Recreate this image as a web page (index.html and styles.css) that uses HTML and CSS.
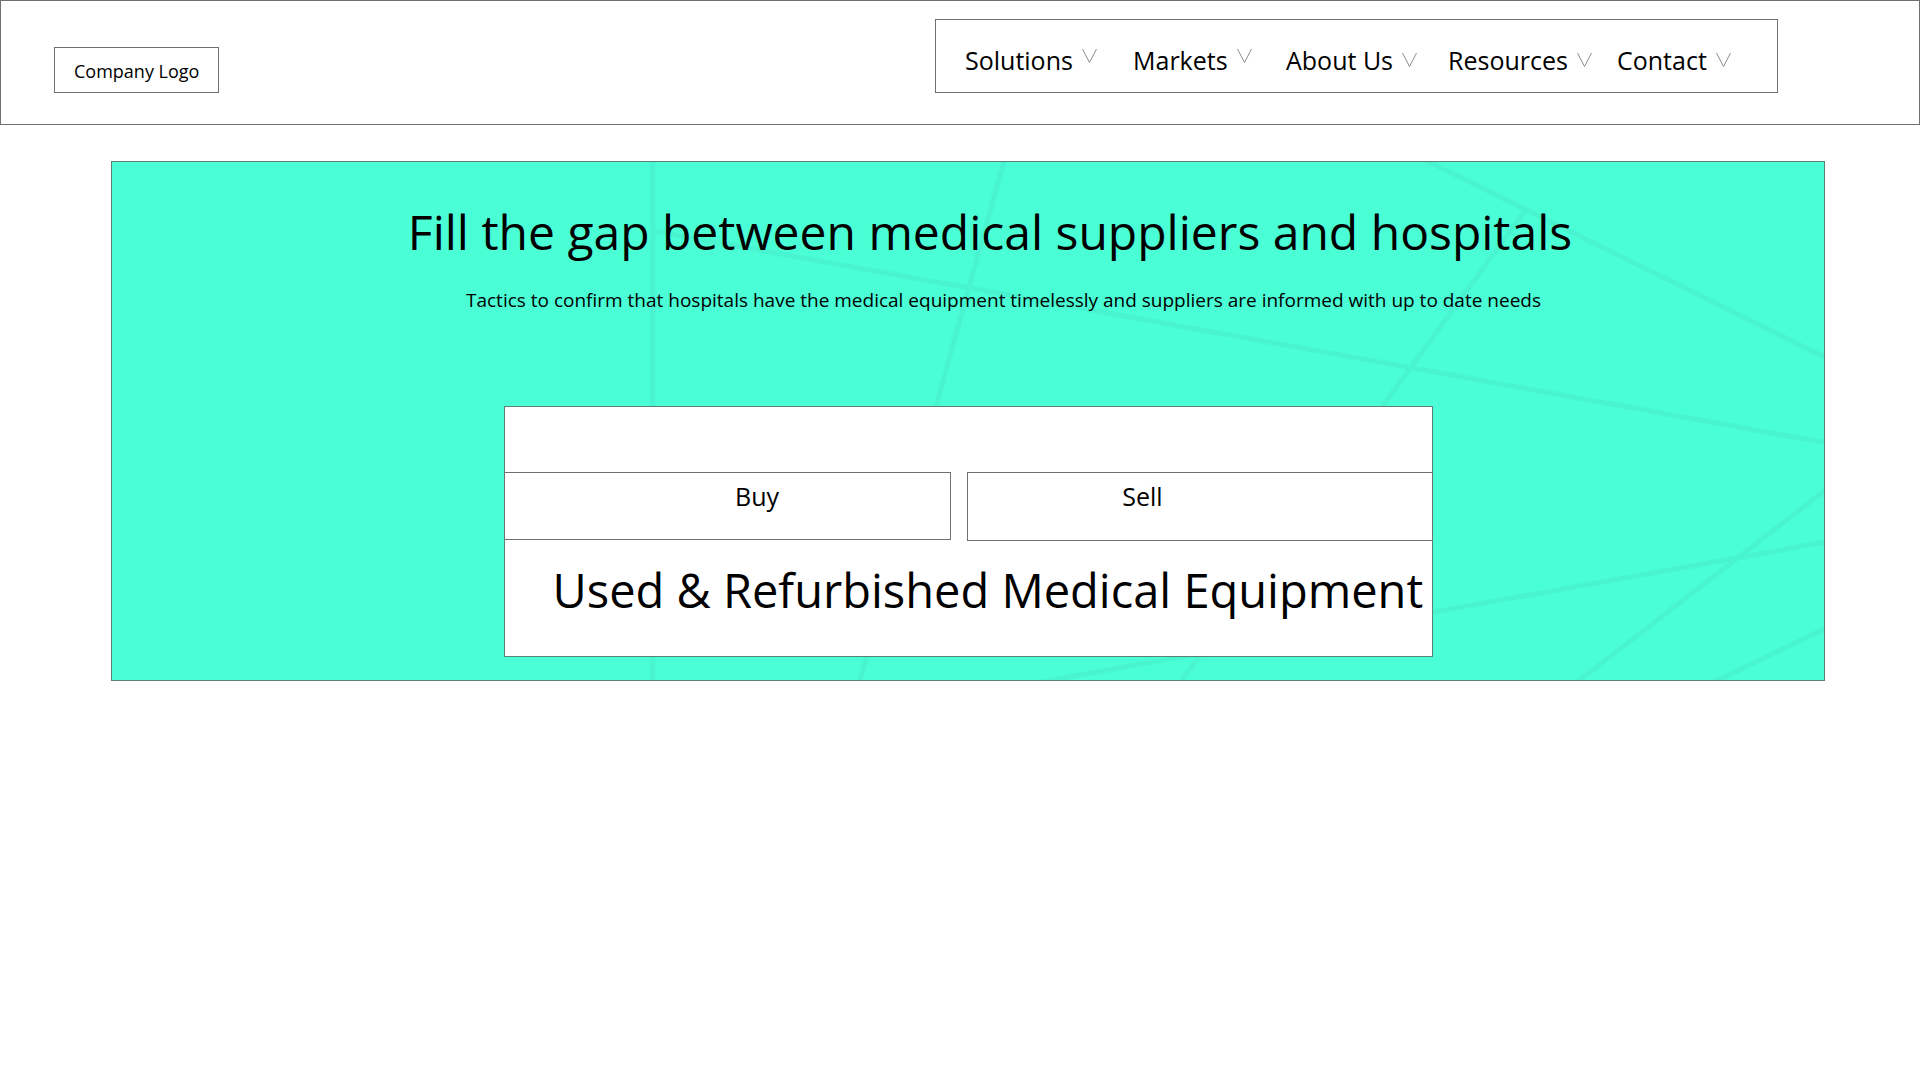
FILE: index.html
```html
<!DOCTYPE html>
<html lang="en">
<head>
<meta charset="utf-8">
<meta name="viewport" content="width=device-width, initial-scale=1">
<title>Medical Equipment</title>
<link rel="stylesheet" href="styles.css">
</head>
<body>
<header class="site-header">
  <a class="logo" href="#">Company Logo</a>
  <nav class="main-nav" aria-label="Main">
    <a class="nav-link nav-link-high" href="#">Solutions <svg class="chevron" viewBox="0 0 15 14" aria-hidden="true"><path d="M0.5 0L7.5 13.5L14.5 0"/></svg></a>
    <a class="nav-link nav-link-high" href="#">Markets <svg class="chevron" viewBox="0 0 15 14" aria-hidden="true"><path d="M0.5 0L7.5 13.5L14.5 0"/></svg></a>
    <a class="nav-link" href="#">About Us <svg class="chevron" viewBox="0 0 15 14" aria-hidden="true"><path d="M0.5 0L7.5 13.5L14.5 0"/></svg></a>
    <a class="nav-link" href="#">Resources <svg class="chevron" viewBox="0 0 15 14" aria-hidden="true"><path d="M0.5 0L7.5 13.5L14.5 0"/></svg></a>
    <a class="nav-link" href="#">Contact <svg class="chevron" viewBox="0 0 15 14" aria-hidden="true"><path d="M0.5 0L7.5 13.5L14.5 0"/></svg></a>
  </nav>
</header>
<main>
  <section class="hero">
    <svg class="hero-lines" viewBox="111 161 1713 519" preserveAspectRatio="none" aria-hidden="true">
      <path d="M652 161V680M1005 155L934 411L858 686M652 230L1830 443M1419 156L1830 359M1527 207L1382 406L1177 686M1040 682L1433 612L1830 541M1572 686L1830 486M1706 686L1830 626"/>
    </svg>
    <h1 class="hero-title">Fill the gap between medical suppliers and hospitals</h1>
    <p class="hero-text">Tactics to confirm that hospitals have the medical equipment timelessly and suppliers are informed with up to date needs</p>
    <div class="card">
      <div class="card-actions">
        <button class="action action-buy" type="button">Buy</button>
        <button class="action action-sell" type="button">Sell</button>
      </div>
      <h2 class="card-title">Used &amp; Refurbished Medical Equipment</h2>
    </div>
  </section>
</main>
</body>
</html>
```
FILE: styles.css
```css
* {
  box-sizing: border-box;
}

body {
  margin: 0;
  background: #fff;
  color: #000;
  font-family: "Open Sans", "Noto Sans", sans-serif;
}

a {
  color: inherit;
  text-decoration: none;
}

h1,
h2,
p {
  margin: 0;
  font-weight: 400;
}

.site-header {
  display: flex;
  justify-content: space-between;
  align-items: flex-end;
  padding: 18px 141px 31px 53px;
  border: 1px solid #707070;
}

.logo {
  padding: 11px 19px 9px;
  border: 1px solid #707070;
  font-size: 18px;
  line-height: 24px;
}

.main-nav {
  display: grid;
  grid-template-columns: 168fr 153fr 162fr 169fr 160fr;
  flex: 0 1 843px;
  padding: 23px 0 15px 29px;
  border: 1px solid #707070;
  font-size: 25px;
  line-height: 34px;
}

.nav-link {
  display: flex;
  align-items: center;
  gap: 9px;
  white-space: nowrap;
}

.chevron {
  width: 15px;
  height: 14px;
  fill: none;
  stroke: #8c8c8c;
}

.nav-link-high .chevron {
  margin-bottom: 8px;
}

.hero {
  position: relative;
  margin: 36px 95px 0 111px;
  padding: 35px 0 23px;
  border: 1px solid #5c7f77;
  background: #4afed6;
  text-align: center;
}

.hero-lines {
  position: absolute;
  inset: 0;
  width: 100%;
  height: 100%;
  fill: none;
  stroke: #48f5d0;
  stroke-width: 5;
}

.hero-title {
  position: relative;
  padding-left: 44px;
  font-size: 48px;
  line-height: 70px;
}

.hero-text {
  position: relative;
  padding: 20px 0 0 71px;
  font-size: 19px;
  line-height: 26px;
}

.card {
  position: relative;
  width: 929px;
  max-width: 100%;
  margin: 93px auto 0;
  padding: 65px 0 30px;
  border: 1px solid #5c7f77;
  background: #fff;
}

.card-actions {
  display: grid;
  grid-template-columns: 447fr 466fr;
  align-items: start;
  gap: 16px;
  margin: 0 -1px;
}

.action {
  border: 1px solid #707070;
  background: none;
  color: inherit;
  font: inherit;
  font-size: 25px;
  line-height: 34px;
}

.action-buy {
  padding: 6px 0 26px 60px;
}

.action-sell {
  padding: 6px 114px 27px 0;
}

.card-title {
  padding: 13px 0 0 48px;
  font-size: 47px;
  line-height: 72px;
  text-align: left;
  white-space: nowrap;
}
```
